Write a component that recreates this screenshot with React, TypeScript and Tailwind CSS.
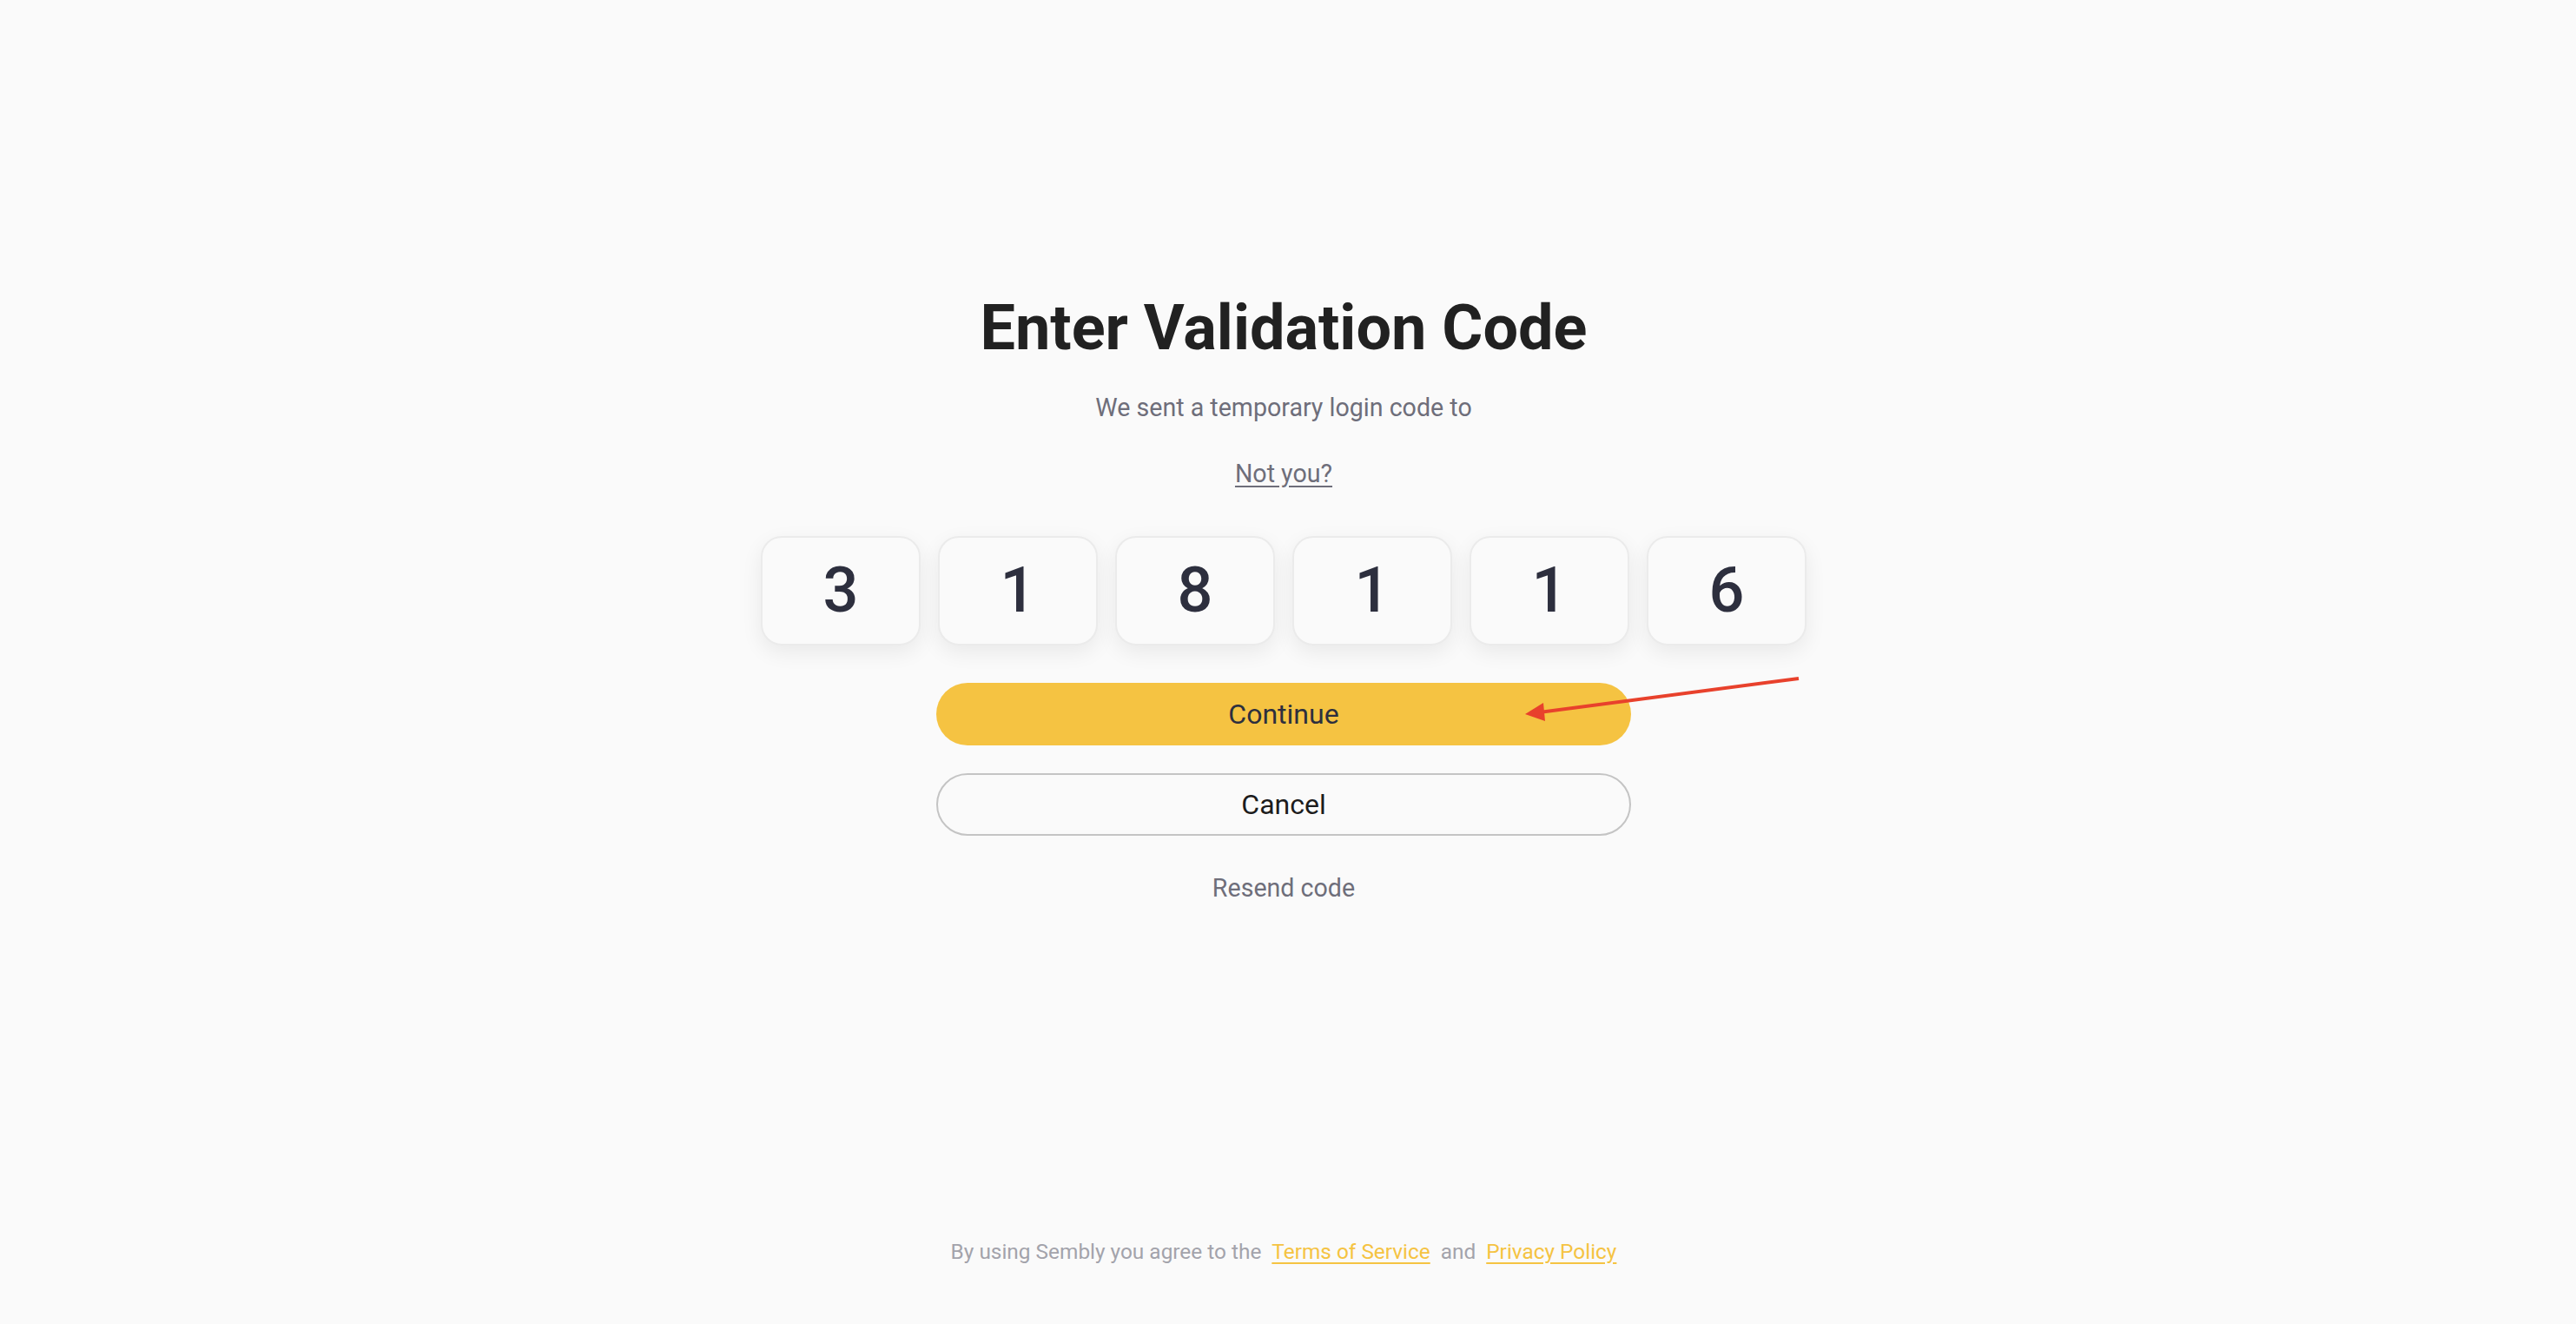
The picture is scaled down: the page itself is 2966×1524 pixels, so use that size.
const digits = ['3', '1', '8', '1', '1', '6'];

function CodeBox({ value }: { value: string }) {
  return (
    <div className="flex h-[126px] w-[184px] items-center justify-center rounded-[24px] border-2 border-[#ebebeb] bg-[#fafafa] shadow-[0_8px_24px_rgba(0,0,0,0.07)]">
      <span className="text-[72px] font-medium leading-none text-[#2d2f3e]">{value}</span>
    </div>
  );
}

export default function App() {
  return (
    <div
      className="relative flex min-h-screen flex-col items-center bg-[#fafafa] pr-[10px]"
      style={{ fontFamily: 'Roboto, "Liberation Sans", sans-serif' }}
    >
      <div className="flex flex-col items-center pt-[335px]">
        <h1 className="text-[72px] font-bold leading-[86px] text-[#212121]">Enter Validation Code</h1>
        <p className="mt-[28px] text-[28.6px] leading-[40px] text-[#6e6e7a]">We sent a temporary login code to</p>
        <a href="#" className="mt-[36px] text-[28.6px] leading-[40px] text-[#6e6e7a] underline underline-offset-4">
          Not you?
        </a>

        <div className="mt-[52px] flex gap-[20px]">
          {digits.map((d, i) => (
            <CodeBox key={i} value={d} />
          ))}
        </div>

        <button className="mt-[43px] h-[72px] w-[800px] rounded-full bg-[#f5c342] text-[32px] text-[#2d2f3e]">
          Continue
        </button>
        <button className="mt-[32px] h-[72px] w-[800px] rounded-full border-2 border-[#c4c4c4] bg-transparent text-[32px] text-[#1c1c1c]">
          Cancel
        </button>
        <button className="mt-[40px] text-[28.6px] leading-[40px] text-[#6e6e7a]">Resend code</button>
      </div>

      <div className="mt-auto flex items-center gap-[12px] pb-[66px] text-[24.4px] leading-[34px] text-[#a3a3ab]">
        <span>By using Sembly you agree to the</span>
        <a href="#" className="text-[#f5c342] underline underline-offset-4">Terms of Service</a>
        <span>and</span>
        <a href="#" className="text-[#f5c342] underline underline-offset-4">Privacy Policy</a>
      </div>

      {/* annotation arrow */}
      <svg className="pointer-events-none absolute left-0 top-0" width="2966" height="1524">
        <line x1="2071" y1="781" x2="1772" y2="820" stroke="#e8412c" strokeWidth="4" />
        <polygon points="1756,822 1777,809 1779,830" fill="#e8412c" />
      </svg>
    </div>
  );
}
